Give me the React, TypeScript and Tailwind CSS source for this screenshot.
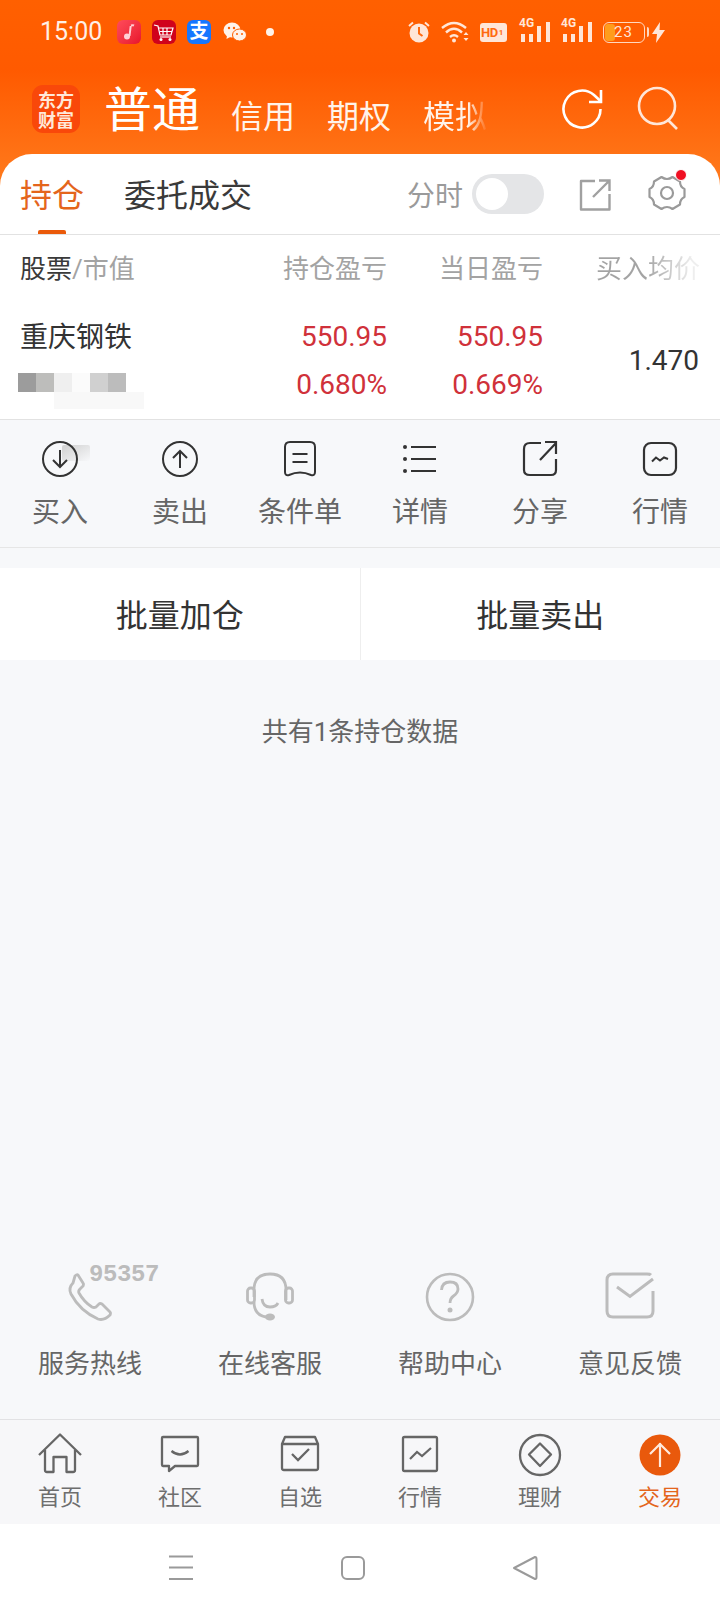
import React from "react";

const S = ({ w, h, children, className = "" }: { w: number; h: number; children: React.ReactNode; className?: string }) => (
  <svg width={w} height={h} viewBox={`0 0 ${w} ${h}`} fill="none" className={"block shrink-0 " + className}>
    {children}
  </svg>
);

const Signal = () => (
  <div className="relative w-[32px] h-[24px]">
    <span className="absolute left-0 top-[-4px] text-[12px] leading-[14px] font-bold text-[#ffe6d8] font-['Roboto',sans-serif]">4G</span>
    <S w={32} h={24}>
      <g fill="#ffe6d8">
        <rect x="2" y="14" width="4" height="8" />
        <rect x="10" y="14" width="4" height="8" />
        <rect x="18" y="6" width="4" height="16" />
        <rect x="27" y="2" width="4" height="20" />
      </g>
    </S>
  </div>
);

const StatusBar = () => (
  <div className="h-[64px] pt-[20px] pl-[40px] flex items-start">
    <span className="text-[25px] leading-[24px] text-[#fff0e6] w-[77px]">15:00</span>
    <div className="w-[24px] h-[24px] rounded-[6px] bg-gradient-to-br from-[#ff4a5a] to-[#e8102c] flex items-center justify-center">
      <S w={14} h={18}>
        <path d="M9 2.500 Q11 2 12 2.500 M8.700 3 L7.500 13" stroke="#ffd0d6" strokeWidth="2" />
        <circle cx="5" cy="13.500" r="3" fill="#ffd0d6" />
      </S>
    </div>
    <div className="ml-[11px] w-[24px] h-[24px] rounded-[6px] bg-[#d0021b] flex items-center justify-center">
      <S w={22} h={20}>
        <path d="M1 3 L5 4 L7 13 H18 L20 6 H6 M7 9.500 H19 M10 6 V13 M14 6 V13" stroke="#fff" strokeWidth="1.200" />
        <path d="M7 15 H18" stroke="#fff" strokeWidth="1.200" />
        <circle cx="8" cy="17.500" r="1.500" fill="#fff" />
        <circle cx="17" cy="17.500" r="1.500" fill="#fff" />
      </S>
    </div>
    <div className="ml-[11px] w-[24px] h-[24px] rounded-[6px] bg-[#1677ff] flex items-center justify-center text-[19px] leading-[24px] font-bold text-white">支</div>
    <div className="ml-[12px]">
      <S w={24} h={24}>
        <ellipse cx="9" cy="10" rx="8.500" ry="7.500" fill="#fff3ea" />
        <path d="M4 15 L3.500 19 L8 16.500 Z" fill="#fff3ea" />
        <ellipse cx="16.500" cy="15" rx="7" ry="6" fill="#fff3ea" stroke="#ff5f00" strokeWidth="1" />
        <circle cx="6" cy="8" r="1.200" fill="#ff5f00" />
        <circle cx="11" cy="8" r="1.200" fill="#ff5f00" />
        <circle cx="14" cy="14" r="1" fill="#ff5f00" />
        <circle cx="19" cy="14" r="1" fill="#ff5f00" />
      </S>
    </div>
    <div className="ml-[19px] mt-[8px] w-[8px] h-[8px] rounded-full bg-[#fff3ea]" />
    <div className="ml-[134px]">
      <S w={22} h={24}>
        <circle cx="11" cy="13" r="9.500" fill="#ffe6d8" />
        <path d="M11 7 V13.500 L14.500 16" stroke="#ff6a10" strokeWidth="2" />
        <path d="M1 6 L5 2.500 M21 6 L17 2.500" stroke="#ffe6d8" strokeWidth="2" />
      </S>
    </div>
    <div className="ml-[11px]">
      <S w={28} h={24}>
        <path d="M1 8 Q13 -2 25 8 M5 12.500 Q13 5 21 12.500 M9 17 Q13 13.500 17 17" stroke="#ffe6d8" strokeWidth="2.400" />
        <circle cx="13" cy="20.500" r="2" fill="#ffe6d8" />
        <path d="M22.500 15 L25 12 L27.500 15 Z M22.500 18 L25 21 L27.500 18 Z" fill="#ffe6d8" />
      </S>
    </div>
    <div className="ml-[11px] mt-[3px] w-[27px] h-[19px] rounded-[3px] bg-[#ffe6d8] flex items-center pl-[1px] text-[13px] leading-[19px] font-bold tracking-[-0.5px] text-[#ff6a10] font-['Roboto',sans-serif]">
      HD<span className="text-[8px] leading-[8px] ml-[1px]">1</span>
    </div>
    <div className="ml-[12px]"><Signal /></div>
    <div className="ml-[10px]"><Signal /></div>
    <div className="ml-[10px] mt-[2px] relative w-[42px] h-[21px] rounded-[6px] border border-[#ffd9c0] flex items-center overflow-hidden">
      <div className="absolute left-[1px] top-[1px] bottom-[1px] w-[10px] rounded-[3px] bg-[#ff9d1c]" />
      <span className="relative pl-[10px] text-[15px] leading-[19px] tracking-[1px] text-[#ffe6d8]">23</span>
    </div>
    <div className="ml-[2px] mt-[7px] w-[2px] h-[10px] rounded-r-[2px] bg-[#ffd9c0]" />
    <div className="ml-[3px] mt-[2px]">
      <S w={13} h={21}>
        <path d="M8 0 L0 12 H5 L4 21 L13 8 H7.500 Z" fill="#ffe6d8" />
      </S>
    </div>
  </div>
);

const Title = () => (
  <div className="h-[90px] flex items-start">
    <div className="ml-[32px] mt-[21px] w-[48px] h-[48px] rounded-[11px] bg-[#f9480a] flex flex-col items-center justify-center text-[#ffe8d8] text-[18px] leading-[20px] font-bold font-['Noto_Sans_CJK_SC',serif]">
      <span>东方</span>
      <span>财富</span>
    </div>
    <span className="ml-[24px] mt-[13px] text-[48px] leading-[68px] text-white">普通</span>
    <span className="ml-[31px] mt-[29px] text-[32px] leading-[48px] text-[#fff3ea]">信用</span>
    <span className="ml-[32px] mt-[29px] text-[32px] leading-[48px] text-[#fff3ea]">期权</span>
    <span className="ml-[32px] mt-[29px] text-[32px] leading-[48px] bg-gradient-to-r from-[#fff3ea] from-[70%] to-[#ff7a1c]/20 to-[100%] bg-clip-text text-transparent">模拟</span>
    <div className="ml-[73px] mt-[23px]">
      <S w={44} h={44}>
        <path d="M40.500 22 A18.500 18.500 0 1 1 34 8 L41 14.500" stroke="#fff" strokeWidth="2.600" />
        <path d="M41 3 V15 H29" stroke="#fff" strokeWidth="2.600" />
      </S>
    </div>
    <div className="ml-[32px] mt-[22px]">
      <S w={44} h={44}>
        <circle cx="21" cy="20" r="18" stroke="#ffe6d8" strokeWidth="2.600" />
        <path d="M32 34 L41 43" stroke="#ffe6d8" strokeWidth="2.600" />
      </S>
    </div>
  </div>
);

const Tabs = () => (
  <div className="h-[81px] bg-white rounded-t-[32px] border-b border-[#e2e2e2] flex items-start relative">
    <div className="ml-[20px] relative h-[80px] w-[66px]">
      <span className="absolute left-0 top-[18px] text-[32px] leading-[48px] text-[#e4651c]">持仓</span>
      <div className="absolute left-[18px] bottom-0 w-[28px] h-[4px] rounded-t-[2px] bg-[#ea5a0a]" />
    </div>
    <span className="ml-[38px] mt-[18px] text-[32px] leading-[48px] text-[#3a3a3a]">委托成交</span>
    <span className="ml-[155px] mt-[23px] text-[28px] leading-[40px] text-[#9a9a9a]">分时</span>
    <div className="ml-[9px] mt-[20px] w-[72px] h-[40px] rounded-full bg-[#e4e5e7] p-[4px]">
      <div className="w-[32px] h-[32px] rounded-full bg-white" />
    </div>
    <div className="ml-[35px] mt-[25px]">
      <S w={32} h={32}>
        <path d="M16 2 H2 V30.500 H30.500 V15" stroke="#a0a0a0" strokeWidth="2.400" strokeLinejoin="round" />
        <path d="M14 18 L30 2 M20 1.500 H30.500 V12" stroke="#a0a0a0" strokeWidth="2.400" />
      </S>
    </div>
    <div className="ml-[37px] mt-[20px] relative">
      <S w={38} h={38}>
        <path d="M13.500 3 Q19 7 24.500 3 L32 7.500 Q32 13 36.500 15 V23 Q32 25 32 30.500 L24.500 35 Q19 31 13.500 35 L6 30.500 Q6 25 1.500 23 V15 Q6 13 6 7.500 Z" stroke="#9a9a9a" strokeWidth="2.200" strokeLinejoin="round" />
        <circle cx="19" cy="19" r="6" stroke="#9a9a9a" strokeWidth="2.200" />
      </S>
      <div className="absolute right-[-1px] top-[-5px] w-[10px] h-[10px] rounded-full bg-[#f00f22] border border-white box-content" />
    </div>
  </div>
);

const TableHead = () => (
  <div className="h-[64px] bg-white flex items-center pt-[4px] pr-[20px] text-[26px] leading-[36px] text-[#a3a3a3]">
    <div className="pl-[20px] w-[237px]">
      <span className="text-[#3a3a3a]">股票</span>/市值
    </div>
    <div className="w-[150px] text-right">持仓盈亏</div>
    <div className="w-[156px] text-right">当日盈亏</div>
    <div className="w-[157px] text-right bg-gradient-to-r from-[#a3a3a3] from-[65%] to-[#eeeeee] to-[95%] bg-clip-text text-transparent">买入均价</div>
  </div>
);

const Mosaic = () => (
  <div className="flex flex-col ml-[18px] mt-[15px]">
    <div className="flex h-[19px]">
      <div className="w-[18px] bg-[#9c9c9c]" />
      <div className="w-[18px] bg-[#bdbdbb]" />
      <div className="w-[18px] bg-[#efefef]" />
      <div className="w-[18px] bg-[#fbfbfb]" />
      <div className="w-[18px] bg-[#d0d0d0]" />
      <div className="w-[18px] bg-[#bcbcbc]" />
    </div>
    <div className="ml-[36px] w-[90px] h-[17px] bg-[#f8f8f8]" />
  </div>
);

const Row = () => (
  <div className="h-[121px] bg-white border-b border-[#e2e2e2] flex items-start pr-[21px]">
    <div className="w-[237px] pt-[19px]">
      <div className="pl-[20px] text-[28px] leading-[40px] text-[#333]">重庆钢铁</div>
      <Mosaic />
    </div>
    <div className="w-[150px] text-right text-[28px] leading-[40px] text-[#d0313a] pt-[18px]">
      <div>550.95</div>
      <div className="mt-[8px]">0.680%</div>
    </div>
    <div className="w-[156px] text-right text-[28px] leading-[40px] text-[#d0313a] pt-[18px]">
      <div>550.95</div>
      <div className="mt-[8px]">0.669%</div>
    </div>
    <div className="w-[156px] text-right text-[28px] leading-[40px] text-[#333] pt-[42px]">1.470</div>
  </div>
);

const ActionIcon = ({ kind }: { kind: number }) => {
  const c = "#333";
  return (
    <S w={40} h={40}>
      {kind === 0 && (
        <>
          <circle cx="20" cy="20" r="17" stroke={c} strokeWidth="2" />
          <path d="M20 11 V28 M13 21 L20 28 L27 21" stroke={c} strokeWidth="2" />
        </>
      )}
      {kind === 1 && (
        <>
          <circle cx="20" cy="20" r="17" stroke={c} strokeWidth="2" />
          <path d="M20 29 V12 M13 19 L20 12 L27 19" stroke={c} strokeWidth="2" />
        </>
      )}
      {kind === 2 && (
        <>
          <path d="M10 3 H30 Q35 3 35 8 V33 Q35 37 31 36 Q20 31 9 36 Q5 37 5 33 V8 Q5 3 10 3 Z" stroke={c} strokeWidth="2" />
          <path d="M12.500 15 H27.500 M12.500 23 H27.500" stroke={c} strokeWidth="2" />
        </>
      )}
      {kind === 3 && (
        <>
          <path d="M11 8 H36 M11 20 H36 M11 32 H36" stroke={c} strokeWidth="2.200" />
          <circle cx="5" cy="8" r="2" fill={c} />
          <circle cx="5" cy="20" r="2" fill={c} />
          <circle cx="5" cy="32" r="2" fill={c} />
        </>
      )}
      {kind === 4 && (
        <>
          <path d="M21 4 H10 Q4 4 4 10 V31 Q4 36 10 36 H31 Q36 36 36 31 V20" stroke={c} strokeWidth="2.200" />
          <path d="M20 21 L36 4 M25 3 H36 V15" stroke={c} strokeWidth="2.200" />
        </>
      )}
      {kind === 5 && (
        <>
          <rect x="4" y="4" width="32" height="32" rx="7" stroke={c} strokeWidth="2.200" />
          <path d="M12 22.500 L16 18.500 L20 21.500 L24 18.500 L28 20" stroke={c} strokeWidth="2" />
        </>
      )}
    </S>
  );
};

const Actions = () => (
  <div className="h-[128px] border-b border-[#e6e6e6] bg-[#f7f8fa] flex relative">
    <div className="absolute left-[62px] top-[25px] w-[28px] h-[16px] bg-gradient-to-br from-[#d0d0d0] to-[#f7f8fa] rounded-[2px]" />
    {["买入", "卖出", "条件单", "详情", "分享", "行情"].map((t, i) => (
      <div key={t} className="relative flex-1 flex flex-col items-center pt-[19px]">
        <ActionIcon kind={i} />
        <span className="mt-[16px] text-[28px] leading-[36px] text-[#666]">{t}</span>
      </div>
    ))}
  </div>
);

const Bulk = () => (
  <div className="mt-[20px] h-[92px] bg-white flex text-[32px] leading-[48px] text-[#333]">
    <div className="flex-1 flex items-center justify-center border-r border-[#eeeeee] pt-[4px]">批量加仓</div>
    <div className="flex-1 flex items-center justify-center pt-[4px]">批量卖出</div>
  </div>
);

const gray = "#bcbcbc";

const ServiceIcon = ({ kind }: { kind: number }) => (
  <S w={56} h={56}>
    {kind === 0 && (
      <path d="M9 14 Q4 19 7 25 Q16 42 34 50 Q40 52 46 46 Q47 44 46 43 L38 35 Q36 34 35 35 L32 38 Q30 39 28 38 Q20 33 15 24 Q14 22 16 20 L19 17 Q20 15 19 14 L14 6 Q13 5 11 7 Z" stroke={gray} strokeWidth="2.800" strokeLinejoin="round" transform="translate(2,0)" />
    )}
    {kind === 1 && (
      <>
        <path d="M12 28 V21 Q12 5 28 5 Q44 5 44 21 V31 M12 33 Q12 46 24 48" stroke={gray} strokeWidth="2.800" />
        <rect x="5.500" y="19" width="7" height="15" rx="3" stroke={gray} strokeWidth="2.800" />
        <rect x="43.500" y="19" width="7" height="15" rx="3" stroke={gray} strokeWidth="2.800" />
        <path d="M20 30 Q21 38 28 38 Q34 38 36 34" stroke={gray} strokeWidth="2.800" />
        <ellipse cx="28" cy="48" rx="5" ry="3.500" fill={gray} />
      </>
    )}
    {kind === 2 && (
      <>
        <circle cx="28" cy="28" r="23" stroke={gray} strokeWidth="2.600" />
        <path d="M19.500 21 Q20 13 28 13 Q36 13 36 20 Q36 24 31.500 27 Q28 29.500 28 34" stroke={gray} strokeWidth="2.800" />
        <circle cx="28" cy="41" r="2.500" fill={gray} />
      </>
    )}
    {kind === 3 && (
      <>
        <path d="M49 6 Q48 5 45 5 H11 Q5 5 5 11 V42 Q5 48 11 48 H45 Q51 48 51 42 V22" stroke={gray} strokeWidth="3" />
        <path d="M15 18 L28 27.500 L51 10" stroke={gray} strokeWidth="3" />
      </>
    )}
  </S>
);

const Services = () => (
  <div className="h-[160px] flex relative">
    {["服务热线", "在线客服", "帮助中心", "意见反馈"].map((t, i) => (
      <div key={t} className="flex-1 flex flex-col items-center pt-[10px]">
        <div className="relative">
          <ServiceIcon kind={i} />
          {i === 0 && (
            <span className="absolute left-[27px] top-[-6px] text-[24px] leading-[24px] font-bold tracking-[-0.4px] text-[#bcbcbc] font-['Liberation_Mono',monospace]">95357</span>
          )}
        </div>
        <span className="mt-[21px] text-[26px] leading-[36px] text-[#666]">{t}</span>
      </div>
    ))}
  </div>
);

const NavIcon = ({ kind }: { kind: number }) => {
  const c = "#666";
  return (
    <S w={44} h={44}>
      {kind === 0 && (
        <path d="M1 22 L22 1.500 L43 22 M7 17 V37 Q7 39 9 39 H15.500 V24 H28.500 V39 H35 Q37 39 37 37 V17" stroke={c} strokeWidth="2.300" strokeLinejoin="round" />
      )}
      {kind === 1 && (
        <>
          <path d="M5 4 H39 Q40 4 40 5 V32 Q40 33 39 33 H17 L11 38 V33 H5 Q4 33 4 32 V5 Q4 4 5 4 Z" stroke={c} strokeWidth="2.300" strokeLinejoin="round" />
          <path d="M13.500 18 Q22 25 30.500 18" stroke={c} strokeWidth="2.300" />
        </>
      )}
      {kind === 2 && (
        <>
          <path d="M4 11 L7 4 H37 L40 11 V35 Q40 37 38 37 H6 Q4 37 4 35 Z M4 11 H40" stroke={c} strokeWidth="2.300" strokeLinejoin="round" />
          <path d="M14 21 L20 27 L31 16" stroke={c} strokeWidth="2.300" />
        </>
      )}
      {kind === 3 && (
        <>
          <rect x="5" y="4" width="34" height="34" rx="1.500" stroke={c} strokeWidth="2.300" />
          <path d="M12 26 L19 19 L24 23 L33 15" stroke={c} strokeWidth="2.200" />
        </>
      )}
      {kind === 4 && (
        <>
          <circle cx="22" cy="22" r="20" stroke={c} strokeWidth="2.300" />
          <path d="M22 10.500 L33 21.500 L22 33 L11 21.500 Z" stroke={c} strokeWidth="2.300" strokeLinejoin="round" />
        </>
      )}
      {kind === 5 && (
        <>
          <circle cx="22" cy="22" r="20.500" fill="#e9590c" />
          <path d="M22 34 V10 M12 21 L22 11 L32 21" stroke="#ffeadd" strokeWidth="2.200" />
        </>
      )}
    </S>
  );
};

const BottomNav = () => (
  <div className="h-[105px] border-t border-[#e2e2e4] bg-[#f7f7f9] flex">
    {["首页", "社区", "自选", "行情", "理财", "交易"].map((t, i) => (
      <div key={t} className="flex-1 flex flex-col items-center pt-[13px]">
        <NavIcon kind={i} />
        <span className={"mt-[6px] text-[22px] leading-[30px] " + (i === 5 ? "text-[#e4651c]" : "text-[#6e6e6e]")}>{t}</span>
      </div>
    ))}
  </div>
);

const SystemNav = () => (
  <div className="h-[88px] bg-white flex items-start justify-center gap-[146px] pt-[31px] pr-[14px]">
    <S w={26} h={26}>
      <path d="M1 1.500 H25 M1 12.500 H25 M1 24 H25" stroke="#9a9a9a" strokeWidth="2" />
    </S>
    <S w={26} h={26}>
      <rect x="2" y="2" width="22" height="22" rx="5" stroke="#9a9a9a" strokeWidth="2" />
    </S>
    <S w={26} h={26}>
      <path d="M2 13 L23 2 Q24.500 2 24.500 4 V22 Q24.500 24.500 23 24 Z" stroke="#9a9a9a" strokeWidth="2" strokeLinejoin="round" />
    </S>
  </div>
);

export default function App() {
  return (
    <div className="w-[720px] h-[1612px] flex flex-col overflow-hidden bg-[#f7f8fa] font-['Roboto','Noto_Sans_CJK_SC',sans-serif]">
      <div className="bg-[linear-gradient(180deg,#ff6000_0,#ff5a00_70px,#ff7c1e_190px)]">
        <StatusBar />
        <Title />
        <Tabs />
      </div>
      <TableHead />
      <Row />
      <Actions />
      <Bulk />
      <div className="flex-1 flex justify-center pt-[54px] text-[26px] leading-[36px] text-[#666]">共有1条持仓数据</div>
      <Services />
      <BottomNav />
      <SystemNav />
    </div>
  );
}
